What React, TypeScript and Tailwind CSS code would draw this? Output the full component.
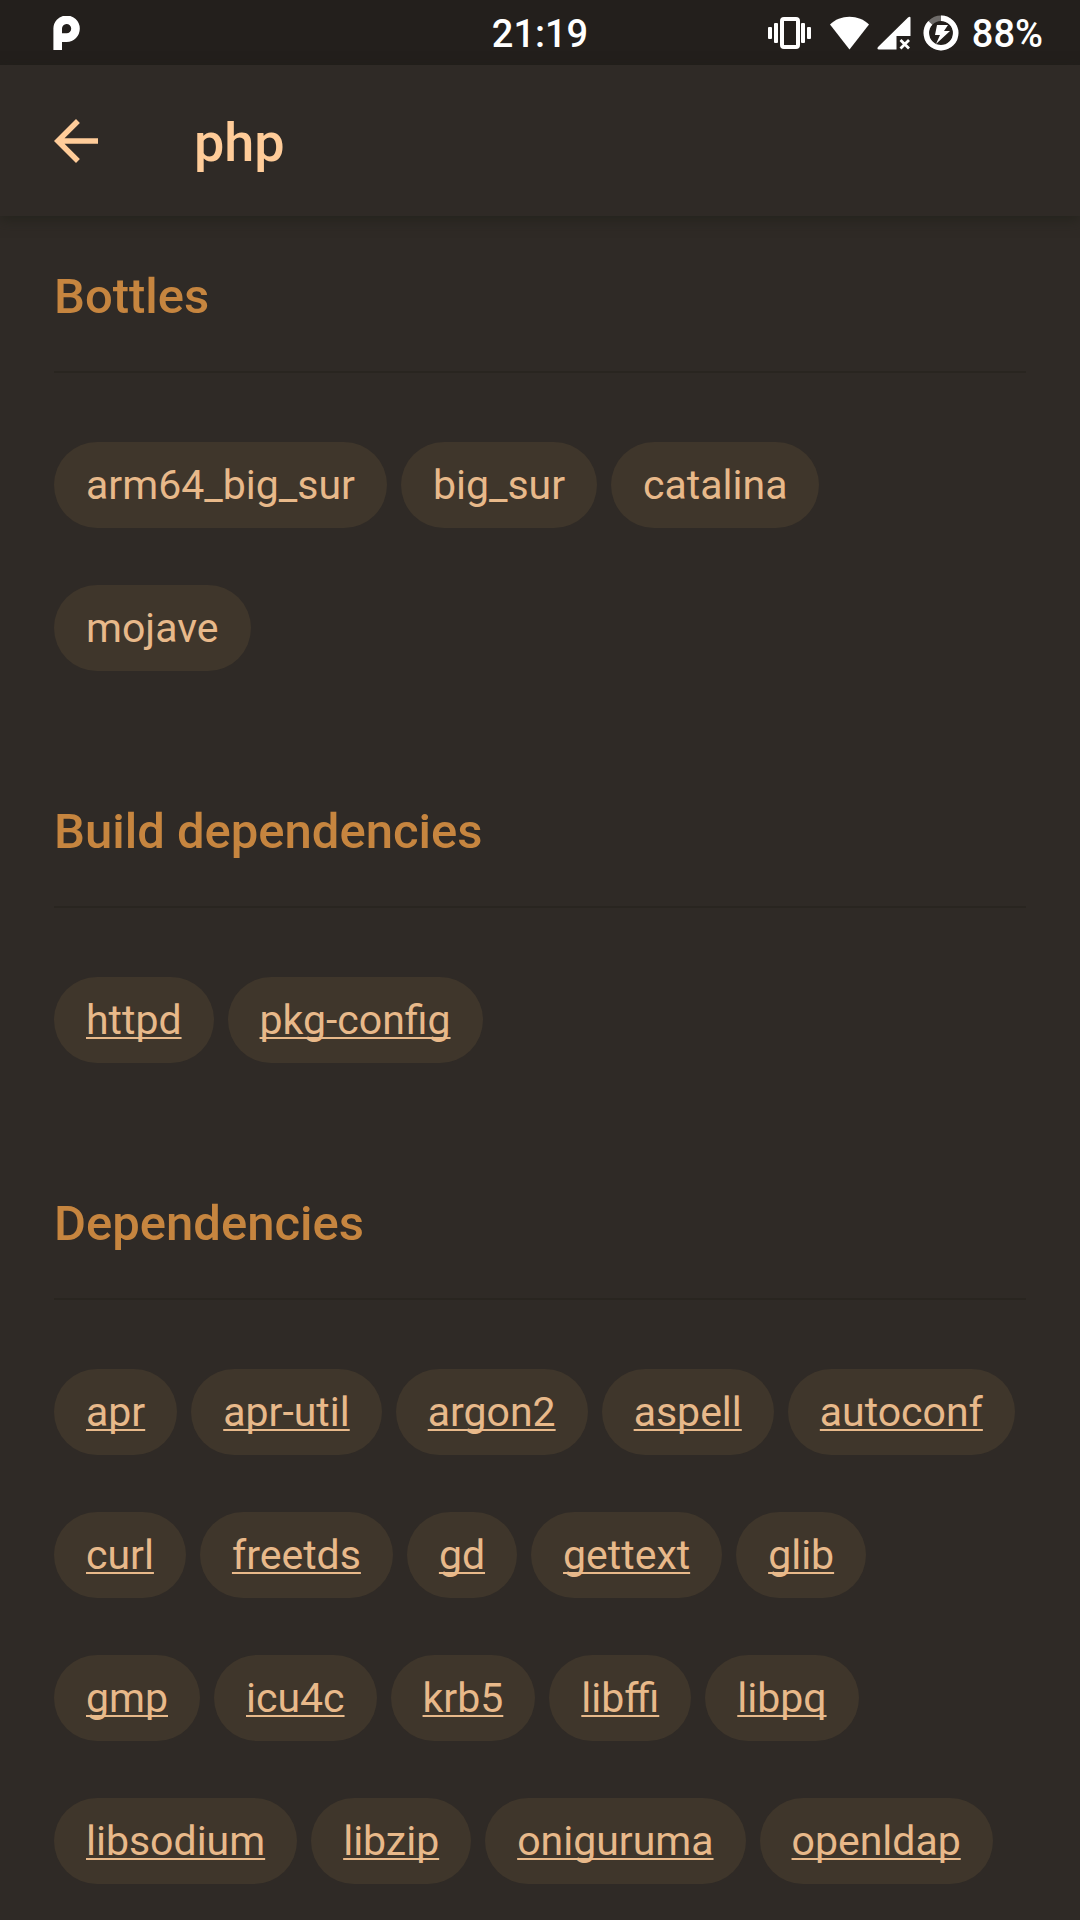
import React from "react";

type Item = { name: string; href?: string };
type Group = { title: string; items: Item[] };

const links = (names: string[]): Item[] =>
  names.map((name) => ({ name, href: `#${name}` }));

const groups: Group[] = [
  {
    title: "Bottles",
    items: ["arm64_big_sur", "big_sur", "catalina", "mojave"].map((name) => ({ name })),
  },
  { title: "Build dependencies", items: links(["httpd", "pkg-config"]) },
  {
    title: "Dependencies",
    items: links([
      "apr", "apr-util", "argon2", "aspell", "autoconf",
      "curl", "freetds", "gd", "gettext", "glib",
      "gmp", "icu4c", "krb5", "libffi", "libpq",
      "libsodium", "libzip", "oniguruma", "openldap",
    ]),
  },
];

function StatusBar() {
  return (
    <div className="grid h-[65px] grid-cols-3 items-center bg-[#231f1c] text-[38px] leading-[44px] font-medium text-white">
      <svg className="ml-[53px] h-[34px] w-[27px]" viewBox="0 0 27 34" fill="none" aria-hidden="true">
        <path d="M4.700 34V13.200a8.900 8.900 0 1 1 8.900 8.400H9" stroke="white" strokeWidth="8.600" />
      </svg>
      <span className="pt-[2px] text-center">21:19</span>
      <div className="flex items-center justify-end pr-[37px]">
        <svg className="h-[34px] w-[44px]" viewBox="0 0 44 34" aria-hidden="true">
          <g fill="white">
            <rect x="0" y="11" width="4" height="12" rx="1" />
            <rect x="6" y="7" width="4" height="20" rx="1" />
            <rect x="33" y="7" width="4" height="20" rx="1" />
            <rect x="39" y="11" width="4" height="12" rx="1" />
          </g>
          <rect x="14" y="3" width="16" height="28" rx="2" fill="none" stroke="white" strokeWidth="4" />
        </svg>
        <svg className="ml-[18px] h-[34px] w-[39px]" viewBox="0 0 39 34" fill="white" aria-hidden="true">
          <path d="M0 8.500C5 3.600 12 .800 19.500.800S34 3.600 39 8.500L19.500 33.500Z" />
        </svg>
        <svg className="ml-[8px] h-[34px] w-[34px]" viewBox="0 0 34 34" fill="white" aria-hidden="true">
          <path d="M33.500 1.500V20H19.500V33.500H2Q-.500 33.500 1 31L31 1.500Q33 0 33.500 1.500Z" />
          <path d="M23.500 24l8.500 8.500M32 24l-8.500 8.500" stroke="white" strokeWidth="2.800" />
        </svg>
        <svg className="ml-[12px] h-[36px] w-[36px]" viewBox="0 0 36 36" fill="none" aria-hidden="true">
          <circle cx="18" cy="18" r="14.700" stroke="#6f6c6a" strokeWidth="5.500" />
          <circle cx="18" cy="18" r="14.700" stroke="white" strokeWidth="5.500" pathLength="100" strokeDasharray="87 13" transform="rotate(-90 18 18)" />
          <path d="M14 10h11l-4 6h6L13 29l4-9h-5Z" fill="white" />
        </svg>
        <span className="ml-[13px] pt-[2px]">88%</span>
      </div>
    </div>
  );
}

function AppBar() {
  return (
    <header className="flex h-[151px] items-center bg-[#2f2a26] px-[40px] text-[#ffcc99] shadow-[0_4px_12px_rgba(30,32,24,0.6)]">
      <button type="button" aria-label="Back" className="flex size-[72px] items-center justify-center">
        <svg className="size-[66px]" viewBox="0 0 24 24" fill="currentColor" aria-hidden="true">
          <path d="M20 11H7.830l5.590-5.590L12 4l-8 8 8 8 1.410-1.410L7.830 13H20v-2z" />
        </svg>
      </button>
      <h1 className="ml-[82px] pt-[4px] text-[54px] leading-[64px] font-medium">php</h1>
    </header>
  );
}

function Chip({ name, href }: Item) {
  return (
    <li className="flex h-[86px] items-center rounded-full bg-[#3f362b] px-[32px]">
      {href ? (
        <a
          href={href}
          className="underline decoration-2 underline-offset-[3px] [text-decoration-skip-ink:none]"
        >
          {name}
        </a>
      ) : (
        <span>{name}</span>
      )}
    </li>
  );
}

export default function App() {
  return (
    <div className="flex min-h-screen flex-col bg-[#2f2a26] font-['Roboto',sans-serif]">
      <StatusBar />
      <AppBar />
      <main className="flex flex-col gap-[128px] px-[54px] pt-[48px] pb-[36px]">
        {groups.map((group) => (
          <section key={group.title}>
            <h2 className="border-b-2 border-[#292520] pb-[42px] text-[49px] leading-[65px] font-medium text-[#c6853f]">
              {group.title}
            </h2>
            <ul className="mt-[69px] flex flex-wrap gap-x-[14px] gap-y-[57px] text-[41px] leading-[48px] text-[#e8b98a]">
              {group.items.map((item) => (
                <Chip key={item.name} {...item} />
              ))}
            </ul>
          </section>
        ))}
      </main>
    </div>
  );
}
